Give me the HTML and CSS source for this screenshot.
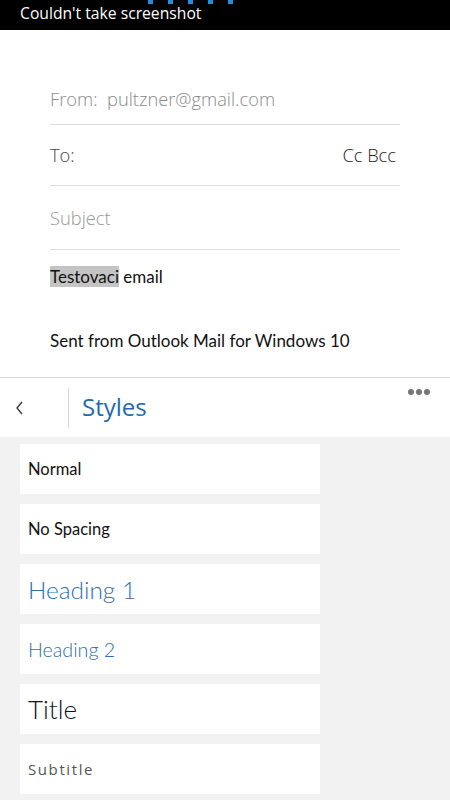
FILE: index.html
```html
<!DOCTYPE html>
<html lang="en">
<head>
    <meta charset="UTF-8" />
    <meta name="viewport" content="width=device-width, initial-scale=1.0" />
    <title>Styles</title>
    <link rel="stylesheet" href="styles.css">
</head>
<body>
<div class="toast">
    <div class="dots">
        <span></span><span></span><span></span><span></span><span></span>
    </div>
    <div class="toast-text">Couldn't take screenshot</div>
</div>

<div class="compose">
    <div class="field from">From:&nbsp; pultzner@gmail.com</div>
    <div class="field to"><span>To:</span><span class="ccbcc">Cc Bcc</span></div>
    <div class="field subject">Subject</div>
    <p class="body-line first"><span class="sel">Testovaci</span> email</p>
    <p class="body-line sig">Sent from Outlook Mail for Windows 10</p>
</div>

<div class="panel-head">
    <div class="back">
        <svg width="12" height="16" viewBox="0 0 12 16"><path d="M8 2 L3 8 L8 14" fill="none" stroke="#333" stroke-width="1.3"/></svg>
    </div>
    <div class="sep"></div>
    <div class="panel-title">Styles</div>
    <div class="more"><span></span><span></span><span></span></div>
</div>

<div class="style-list">
    <div class="style-card"><span class="s-normal">Normal</span></div>
    <div class="style-card"><span class="s-normal">No Spacing</span></div>
    <div class="style-card"><span class="s-h1">Heading 1</span></div>
    <div class="style-card"><span class="s-h2">Heading 2</span></div>
    <div class="style-card"><span class="s-title">Title</span></div>
    <div class="style-card"><span class="s-sub">Subtitle</span></div>
</div>
</body>
</html>
```

FILE: styles.css
```css
body {
    margin: 0;
    padding: 0;
    width: 450px;
    height: 800px;
    overflow: hidden;
    background-color: #F2F2F2;
    font-family: "Open Sans", Arial, sans-serif;
}

.toast {
    background-color: #000;
    height: 30px;
}
.dots {
    display: flex;
    gap: 15px;
    padding-left: 148px;
}
.dots span {
    display: block;
    width: 5px;
    height: 4px;
    background-color: #1E90E0;
}
.toast-text {
    color: #FFF;
    font-size: 15.7px;
    padding-left: 20px;
    line-height: 22px;
    margin-top: -2px;
}

.compose {
    background-color: #FFF;
    padding: 0 50px;
    height: 347px;
    border-bottom: 1px solid #D8D8D8;
}
.field {
    border-bottom: 1px solid #DCDCDC;
    font-size: 18.3px;
    color: #8A8A8A;
    font-weight: 300;
}
.field.from {
    padding-top: 58px;
    height: 36px;
    line-height: 22px;
}
.field.to {
    display: flex;
    justify-content: space-between;
    color: #444;
    height: 60px;
    line-height: 60px;
}
.ccbcc {
    color: #222;
    padding-right: 4px;
}
.field.subject {
    height: 63px;
    line-height: 63px;
    color: #999;
}
.body-line {
    margin: 0;
    font-family: Lato, "Open Sans", sans-serif;
    font-size: 17px;
    color: #111;
}
.body-line.first {
    margin-top: 16px;
    line-height: 22px;
}
.body-line.sig {
    margin-top: 42px;
}
.sel {
    background-color: #C4C4C4;
}

.panel-head {
    background-color: #FFF;
    height: 59px;
    display: flex;
    align-items: center;
    position: relative;
}
.back {
    width: 68px;
    padding-left: 14px;
    box-sizing: border-box;
    padding-top: 4px;
}
.sep {
    width: 1px;
    height: 40px;
    background-color: #D4D4D4;
}
.panel-title {
    color: #1F69B0;
    font-size: 24px;
    padding-left: 13px;
    padding-bottom: 2px;
}
.more {
    position: absolute;
    right: 20px;
    top: 11px;
    display: flex;
    gap: 2px;
}
.more span {
    width: 6px;
    height: 6px;
    border-radius: 50%;
    background-color: #777;
}

.style-list {
    padding: 7px 0 0 20px;
    display: flex;
    flex-direction: column;
    gap: 10px;
}
.style-card {
    background-color: #FFF;
    width: 300px;
    height: 50px;
    box-sizing: border-box;
    padding-left: 8px;
    display: flex;
    align-items: center;
    font-family: Lato, "Open Sans", sans-serif;
}
.s-normal {
    font-size: 16.5px;
    color: #111;
}
.s-h1 {
    font-size: 24.4px;
    color: #2E70AE;
    font-weight: 300;
}
.s-h2 {
    font-size: 19.7px;
    color: #2E70AE;
    font-weight: 300;
}
.s-title {
    font-size: 26px;
    color: #111;
    font-weight: 300;
}
.s-sub {
    font-family: "Open Sans", sans-serif;
    font-size: 15px;
    color: #555;
    letter-spacing: 1.6px;
}
```
